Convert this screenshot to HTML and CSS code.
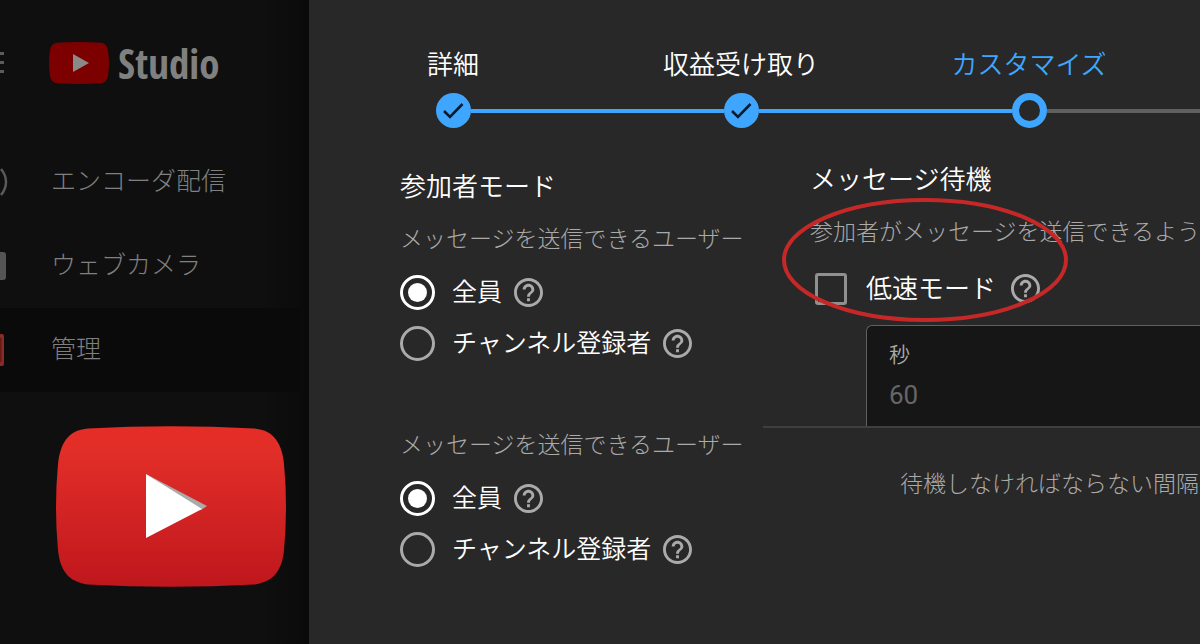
FILE: index.html
```html
<!DOCTYPE html>
<html lang="ja">
<head>
    <meta charset="UTF-8">
    <meta name="viewport" content="width=device-width, initial-scale=1.0">
    <title>Studio</title>
    <link rel="stylesheet" href="styles.css">
</head>
<body>
    <!-- 共通アイコン -->
    <svg class="sprite" aria-hidden="true">
        <symbol id="help" viewBox="2 2 20 20">
            <path d="M11 18h2v-2h-2v2zm1-16C6.48 2 2 6.48 2 12s4.480 10 10 10 10-4.480 10-10S17.520 2 12 2zm0 18c-4.410 0-8-3.590-8-8s3.590-8 8-8 8 3.590 8 8-3.590 8-8 8zm0-14c-2.210 0-4 1.790-4 4h2c0-1.100.900-2 2-2s2 .900 2 2c0 2-3 1.750-3 5h2c0-2.250 3-2.500 3-5 0-2.210-1.790-4-4-4z"/>
        </symbol>
        <symbol id="check" viewBox="0 0 35 35">
            <path d="M8 18l6 6 12.500-13" fill="none" stroke="#0c1b2b" stroke-width="2.600"/>
        </symbol>
    </svg>

    <!-- サイドバー -->
    <aside class="sidebar">
        <header class="brand">
            <svg class="menu-icon" viewBox="0 0 4 22">
                <path d="M0 1.500h4M0 10.500h4M0 19.500h4" stroke="#5c5c5c" stroke-width="3"/>
            </svg>
            <svg class="brand-mark" viewBox="0 0 60 42">
                <path d="M8 .800Q30-.800 52 .800Q58 1.500 59 8Q60.800 21 59 34Q58 40.500 52 41.200Q30 42.800 8 41.200Q2 40.500 1 34Q-.800 21 1 8Q2 1.500 8 .800z" fill="#7d0000"/>
                <path d="M24 12v18l16-9z" fill="#8a8a8a"/>
            </svg>
            <span class="brand-name">Studio</span>
        </header>

        <nav class="nav">
            <a class="nav-item" href="#encoder">
                <svg class="nav-icon" viewBox="0 0 8 32">
                    <path d="M1 3Q6 9 6 16Q6 23 1 29" fill="none" stroke="#5a5a5a" stroke-width="2.500"/>
                </svg>
                <span>エンコーダ配信</span>
            </a>
            <a class="nav-item" href="#webcam">
                <svg class="nav-icon" viewBox="0 0 8 32">
                    <path d="M0 2h3q3 0 3 3v22q0 3-3 3H0z" fill="#555"/>
                </svg>
                <span>ウェブカメラ</span>
            </a>
            <a class="nav-item active" href="#manage">
                <svg class="nav-icon" viewBox="0 0 8 32">
                    <path d="M0 0h2q2 0 2 2v28q0 2-2 2H0z" fill="#8a2a26"/>
                    <path d="M0 4v24" stroke="#641a17" stroke-width="3"/>
                </svg>
                <span>管理</span>
            </a>
        </nav>

        <svg class="big-logo" viewBox="0 0 230 162">
            <defs>
                <linearGradient id="red" x1="0" y1="0" x2="0" y2="1">
                    <stop offset="0" stop-color="#e52d27"/>
                    <stop offset=".15" stop-color="#e22e28"/>
                    <stop offset="1" stop-color="#bf171d"/>
                </linearGradient>
            </defs>
            <path d="M32 2.500Q115-2 198 2.500C218 4 226 18 228 38Q232 81 228 124C226 144 218 156 198 158.500Q115 163 32 158.500C12 156 4 144 2 124Q-2 81 2 38C4 18 12 4 32 2.500z" fill="url(#red)"/>
            <path d="M90 48l61 32-6 4z" fill="#aaa"/>
            <path d="M90 48v64l56-29z" fill="#fff"/>
        </svg>
    </aside>

    <main class="main">
        <!-- ステップ表示 -->
        <ol class="stepper">
            <li class="step">
                <span class="step-label">詳細</span>
                <div class="rail">
                    <span class="line none"></span>
                    <svg class="dot"><use href="#check"/></svg>
                    <span class="line done"></span>
                </div>
            </li>
            <li class="step">
                <span class="step-label">収益受け取り</span>
                <div class="rail">
                    <span class="line done"></span>
                    <svg class="dot"><use href="#check"/></svg>
                    <span class="line done"></span>
                </div>
            </li>
            <li class="step current">
                <span class="step-label">カスタマイズ</span>
                <div class="rail">
                    <span class="line done"></span>
                    <span class="dot ring"></span>
                    <span class="line"></span>
                </div>
            </li>
            <li class="step rest">
                <div class="rail"><span class="line"></span></div>
            </li>
        </ol>

        <div class="columns">
            <section class="members">
                <h2>参加者モード</h2>
                <div class="group" role="radiogroup" aria-labelledby="who1">
                    <p class="desc" id="who1">メッセージを送信できるユーザー</p>
                    <div class="option">
                        <input type="radio" id="all1" name="who1" checked>
                        <label for="all1">全員</label>
                        <svg class="help"><use href="#help"/></svg>
                    </div>
                    <div class="option">
                        <input type="radio" id="sub1" name="who1">
                        <label for="sub1">チャンネル登録者</label>
                        <svg class="help"><use href="#help"/></svg>
                    </div>
                </div>
                <div class="group" role="radiogroup" aria-labelledby="who2">
                    <p class="desc" id="who2">メッセージを送信できるユーザー</p>
                    <div class="option">
                        <input type="radio" id="all2" name="who2" checked>
                        <label for="all2">全員</label>
                        <svg class="help"><use href="#help"/></svg>
                    </div>
                    <div class="option">
                        <input type="radio" id="sub2" name="who2">
                        <label for="sub2">チャンネル登録者</label>
                        <svg class="help"><use href="#help"/></svg>
                    </div>
                </div>
            </section>

            <section class="delay">
                <div class="delay-box">
                    <h2>メッセージ待機</h2>
                    <p class="desc">参加者がメッセージを送信できるように</p>
                    <div class="option slow">
                        <input type="checkbox" id="slow">
                        <label for="slow">低速モード</label>
                        <svg class="help"><use href="#help"/></svg>
                    </div>
                    <div class="field">
                        <label for="seconds">秒</label>
                        <input type="text" id="seconds" value="60">
                    </div>
                </div>
                <p class="hint">待機しなければならない間隔</p>

                <!-- 赤い丸の強調 -->
                <svg class="marker" viewBox="0 0 288 124">
                    <ellipse cx="143" cy="62" rx="141" ry="60" fill="none" stroke="#c62828" stroke-width="4"/>
                </svg>
            </section>
        </div>
    </main>
</body>
</html>
```
FILE: styles.css
```css
/* 全体 */
* {
    box-sizing: border-box;
}

body {
    display: flex;
    min-height: 100vh;
    margin: 0;
    overflow: hidden;
    background-color: #282828;
    color: white;
    font-family: Roboto, "Noto Sans CJK JP", sans-serif;
    font-weight: 350;
}

h2, p, ol {
    margin: 0;
    padding: 0;
    white-space: nowrap;
}

.sprite {
    position: absolute;
    width: 0;
    height: 0;
}

/* サイドバー */
.sidebar {
    flex: 0 0 309px;
    background: linear-gradient(to right, #0f0f0f 85%, #0a0a0a);
}

.brand {
    display: flex;
    align-items: center;
    height: 126px;
}

.menu-icon {
    width: 4px;
    height: 22px;
    margin-right: 45px;
}

.brand-mark {
    width: 60px;
    height: 42px;
    margin-right: 9px;
}

.brand-name {
    color: #808080;
    font-family: "Noto Sans ExtraCondensed", "Open Sans Condensed", "Roboto Condensed", "Liberation Sans Narrow", sans-serif;
    font-size: 41px;
    font-weight: 700;
    line-height: 50px;
}

.nav {
    padding-top: 14px;
    padding-right: 9px;
}

.nav-item {
    display: flex;
    align-items: center;
    gap: 43px;
    height: 84px;
    color: #808080;
    font-size: 25px;
    font-weight: 300;
    line-height: 34px;
    text-decoration: none;
}

.nav-item.active {
    background-color: #0a0a0a;
}

.nav-icon {
    width: 8px;
    height: 32px;
}

.big-logo {
    display: block;
    width: 230px;
    height: 162px;
    margin: 34px 0 0 56px;
}

.main {
    flex: 1;
    min-width: 0;
    overflow: hidden;
}

/* ステップ表示 */
.stepper {
    display: flex;
    padding-top: 48px;
    list-style: none;
}

.step {
    display: flex;
    flex: 0 0 288px;
    flex-direction: column;
    justify-content: flex-end;
    gap: 11px;
    text-align: center;
}

.step.rest {
    flex: 1 0 0;
}

.step-label {
    font-size: 26px;
    line-height: 34px;
}

.current .step-label {
    color: #3ea6ff;
}

.rail {
    display: flex;
    align-items: center;
    height: 35px;
}

.line {
    flex: 1;
    height: 4px;
    background-color: #606060;
}

.line.done {
    background-color: #3ea6ff;
}

.line.none {
    background: none;
}

.dot {
    width: 35px;
    height: 35px;
    border-radius: 50%;
    background-color: #3ea6ff;
}

.dot.ring {
    border: 7px solid #3ea6ff;
    background: none;
}

/* 設定 */
.columns {
    display: flex;
    padding-top: 35px;
}

h2 {
    font-size: 26px;
    font-weight: 350;
    line-height: 34px;
}

.desc, .hint {
    color: #aaa;
    font-size: 23px;
    font-weight: 300;
    line-height: 30px;
}

.members {
    flex: 0 0 454px;
    padding: 7px 0 0 91px;
}

.members .desc {
    margin: 21px 0 12px;
}

.group + .group {
    padding-top: 41px;
}

.option {
    display: flex;
    align-items: center;
    height: 51px;
    font-size: 25px;
    line-height: 34px;
}

.option label {
    margin: 0 12px 0 17px;
}

.option input {
    display: grid;
    flex: none;
    place-items: center;
    width: 35px;
    height: 35px;
    margin: 0;
    border: 3px solid #aaa;
    border-radius: 50%;
    appearance: none;
}

.option input:checked {
    border-color: white;
}

.option input:checked::after {
    content: "";
    width: 19px;
    height: 19px;
    border-radius: 50%;
    background-color: white;
}

.help {
    width: 29px;
    height: 29px;
    fill: #aaa;
}

.delay {
    position: relative;
    flex: 1;
    min-width: 0;
}

.delay-box {
    padding-left: 47px;
    border-bottom: 2px solid #3f3f3f;
}

.delay .desc {
    margin: 21px 0 15px;
}

.option.slow {
    padding-left: 5px;
    font-size: 26px;
}

.option.slow label {
    margin: 0 15px 0 19px;
}

.option.slow input {
    width: 32px;
    height: 32px;
    border-color: #909090;
    border-radius: 3px;
}

.field {
    display: flex;
    flex-direction: column;
    gap: 9px;
    margin: 11px 0 0 56px;
    padding: 14px 22px 15px;
    border: 1px solid #606060;
    border-width: 1px 0 0 1px;
    border-radius: 6px 0 0 0;
    background-color: #161616;
}

.field label {
    color: #aaa;
    font-size: 21px;
    line-height: 30px;
}

.field input {
    width: 100%;
    height: 32px;
    padding: 0;
    border: 0;
    background: none;
    color: #666;
    font-family: Roboto, sans-serif;
    font-size: 26px;
}

.hint {
    margin: 42px 0 0 137px;
}

.marker {
    position: absolute;
    top: 35px;
    left: 19px;
    width: 288px;
    height: 124px;
    pointer-events: none;
}
```
